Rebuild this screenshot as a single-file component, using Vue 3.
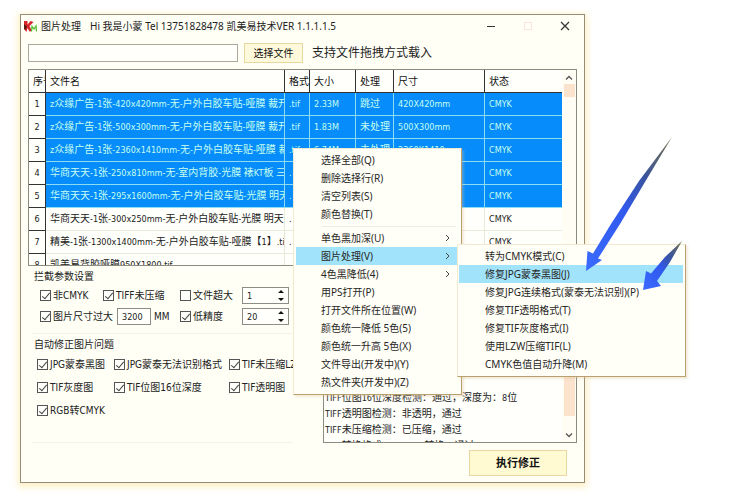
<script setup>
import { ref } from 'vue'

const path = ref('')
const rows = ref([
  { name: 'z众缘广告-1张-420x420mm-无-户外白胶车贴-哑膜 裁开', ext: '.tif', size: '2.33M', state: '跳过', dim: '420X420mm', mode: 'CMYK', selected: true },
  { name: 'z众缘广告-1张-500x300mm-无-户外白胶车贴-哑膜 裁开', ext: '.tif', size: '1.83M', state: '未处理', dim: '500X300mm', mode: 'CMYK', selected: true },
  { name: 'z众缘广告-1张-2360x1410mm-无-户外白胶车贴-哑膜 裁', ext: '.tif', size: '6.74M', state: '未处理', dim: '2360X1410', mode: 'CMYK', selected: true },
  { name: '华商天天-1张-250x810mm-无-室内背胶-光膜 裱KT板 三边', ext: '.', size: '', state: '', dim: '', mode: 'CMYK', selected: true },
  { name: '华商天天-1张-295x1600mm-无-户外白胶车贴-光膜 明天', ext: '.', size: '', state: '', dim: '', mode: 'CMYK', selected: true },
  { name: '华商天天-1张-300x250mm-无-户外白胶车贴-光膜 明天下', ext: '.', size: '', state: '', dim: '', mode: 'CMYK', selected: false },
  { name: '精美-1张-1300x1400mm-无-户外白胶车贴-哑膜【1】.tif', ext: '.', size: '', state: '', dim: '', mode: 'CMYK', selected: false },
  { name: '凯美易背胶哑膜950X1800.tif', ext: '', size: '', state: '', dim: '', mode: '', selected: false },
])

// Latin runs of a file name are set one step smaller than the Chinese ones.
const runs = (text) => text.match(/[\x20-\x7e]+|[^\x20-\x7e]+/g).map((t) => ({ t, latin: t.charCodeAt(0) < 127 }))

const checks = ref({
  nonCmyk: true, tiff: true, large: false, dim: true, low: true,
  jpgBlack: true, jpgFormat: true, tifLzw: true, tifGray: true, tif16: true, tifAlpha: true, rgb: true,
})
const maxFile = ref('1')
const maxDim = ref('3200')
const minDpi = ref('20')

const fixes = [
  { key: 'jpgBlack', label: 'JPG蒙泰黑图' },
  { key: 'jpgFormat', label: 'JPG蒙泰无法识别格式' },
  { key: 'tifLzw', label: 'TIF未压缩LZ' },
  { key: 'tifGray', label: 'TIF灰度图' },
  { key: 'tif16', label: 'TIF位图16位深度' },
  { key: 'tifAlpha', label: 'TIF透明图' },
  { key: 'rgb', label: 'RGB转CMYK' },
]

const menu = [
  { label: '选择全部(Q)' },
  { label: '删除选择行(R)' },
  { label: '清空列表(S)' },
  { label: '颜色替换(T)' },
  { divider: true },
  { label: '单色黑加深(U)', sub: true },
  { label: '图片处理(V)', sub: true, active: true },
  { label: '4色黑降低(4)', sub: true },
  { label: '用PS打开(P)' },
  { label: '打开文件所在位置(W)' },
  { label: '颜色统一降低 5色(5)' },
  { label: '颜色统一升高 5色(X)' },
  { label: '文件导出(开发中)(Y)' },
  { label: '热文件夹(开发中)(Z)' },
]
const submenu = [
  { label: '转为CMYK模式(C)' },
  { label: '修复JPG蒙泰黑图(J)', active: true },
  { label: '修复JPG连续格式(蒙泰无法识别)(P)' },
  { label: '修复TIF透明格式(T)' },
  { label: '修复TIF灰度格式(I)' },
  { label: '使用LZW压缩TIF(L)' },
  { label: 'CMYK色值自动升降(M)' },
]
const logs = ['TIFF位图16位深度检测：通过，深度为：8位', 'TIFF透明图检测：非透明，通过', 'TIFF未压缩检测：已压缩，通过', 'TIFF转换格式：CMYK，转换，通过']
</script>

<template>
  <main class="desk">
    <section class="window">
      <header class="titlebar">
        <svg class="logo" viewBox="0 0 13 13" aria-hidden="true">
          <path d="M0 1 3.500 1 3.500 4.500 6.500 1 9.500 2 5.500 6 8 11 5.500 11.500 3.500 8 2.500 12 0 9Z" fill="#d8242a" />
          <path d="M0 4 3 6.500 1.500 10 0 9Z" fill="#5d1b12" />
          <path d="M7.500 11.500 8 6.500 10 9 12 6 12.500 11.500" fill="none" stroke="#58bf35" stroke-width="1.300" />
        </svg>
        <h1>图片处理</h1>
        <span class="subtitle">Hi 我是小蒙 Tel 13751828478 凯美易技术VER 1.1.1.1.5</span>
        <div class="caption">
          <button aria-label="最小化"><svg viewBox="0 0 10 10"><path d="M1 5.500H9" stroke="#333" /></svg></button>
          <button aria-label="最大化" disabled><svg viewBox="0 0 10 10"><path d="M1.500 1.500H8.500V8.500H1.500Z" fill="none" stroke="#f7e5d8" /></svg></button>
          <button aria-label="关闭"><svg viewBox="0 0 10 10"><path d="M1 1 9 9M9 1 1 9" stroke="#333" stroke-width="1.200" /></svg></button>
        </div>
      </header>

      <div class="toolbar">
        <input v-model="path" class="path" type="text" aria-label="文件路径" />
        <button class="btn pick">选择文件</button>
        <span class="hint">支持文件拖拽方式载入</span>
      </div>

      <div class="list">
        <div class="grid">
          <table>
            <colgroup>
              <col class="c-no" /><col class="c-name" /><col class="c-ext" /><col class="c-size" />
              <col class="c-state" /><col class="c-dim" /><col />
            </colgroup>
            <thead>
              <tr><th>序号</th><th>文件名</th><th>格式</th><th>大小</th><th>处理</th><th>尺寸</th><th>状态</th></tr>
            </thead>
            <tbody>
              <tr v-for="(r, i) in rows" :key="i" :class="{ selected: r.selected }">
                <td>{{ i + 1 }}</td>
                <td class="name"><span v-for="(p, k) in runs(r.name)" :key="k" :class="{ latin: p.latin }">{{ p.t }}</span></td>
                <td>{{ r.ext }}</td><td>{{ r.size }}</td>
                <td>{{ r.state }}</td><td>{{ r.dim }}</td><td>{{ r.mode }}</td>
              </tr>
            </tbody>
          </table>
        </div>
        <div class="scroll">
          <svg viewBox="0 0 8 8"><path d="M1 5.500 4 2.500 7 5.500" fill="none" stroke="#555" stroke-width="1.300" /></svg>
          <i class="thumb short"></i>
        </div>
      </div>

      <div class="lower">
        <div class="options">
          <fieldset>
            <legend>拦截参数设置</legend>
            <div class="rule">
              <label><input v-model="checks.nonCmyk" type="checkbox" />非CMYK</label>
              <label><input v-model="checks.tiff" type="checkbox" />TIFF未压缩</label>
              <label><input v-model="checks.large" type="checkbox" />文件超大</label>
              <span class="spin">
                <input v-model="maxFile" type="text" aria-label="文件大小上限" />
                <svg viewBox="0 0 6 13"><path d="M0 4 3 1 6 4ZM0 9 3 12 6 9Z" fill="#111" /></svg>
              </span>
            </div>
            <div class="rule">
              <label class="wide"><input v-model="checks.dim" type="checkbox" />图片尺寸过大</label>
              <span class="dim"><input id="max-dim" v-model="maxDim" type="text" aria-label="图片尺寸上限" /><label for="max-dim">MM</label></span>
              <label><input v-model="checks.low" type="checkbox" />低精度</label>
              <span class="spin">
                <input v-model="minDpi" type="text" aria-label="最低精度" />
                <svg viewBox="0 0 6 13"><path d="M0 4 3 1 6 4ZM0 9 3 12 6 9Z" fill="#111" /></svg>
              </span>
            </div>
          </fieldset>
          <fieldset class="second">
            <legend>自动修正图片问题</legend>
            <div class="fixes">
              <label v-for="f in fixes" :key="f.key"><input v-model="checks[f.key]" type="checkbox" />{{ f.label }}</label>
            </div>
          </fieldset>
        </div>
        <div class="log">
          <div class="lines"><p v-for="l in logs" :key="l"><span v-for="(p, k) in runs(l)" :key="k" :class="{ latin: p.latin }">{{ p.t }}</span></p></div>
          <div class="scroll end">
            <i class="thumb"></i>
            <svg viewBox="0 0 8 8"><path d="M1 2.500 4 5.500 7 2.500" fill="none" stroke="#555" stroke-width="1.300" /></svg>
          </div>
        </div>
      </div>

      <footer><button class="btn run">执行修正</button></footer>
    </section>

    <nav class="menu main-menu" aria-label="列表菜单">
      <template v-for="(m, i) in menu" :key="i">
        <hr v-if="m.divider" />
        <button v-else :class="{ active: m.active }">
          {{ m.label }}
          <svg v-if="m.sub" viewBox="0 0 5 8"><path d="M1 1 4 4 1 7" fill="none" stroke="#444" /></svg>
        </button>
      </template>
    </nav>
    <nav class="menu sub-menu" aria-label="图片处理">
      <button v-for="m in submenu" :key="m.label" :class="{ active: m.active }">{{ m.label }}</button>
    </nav>

    <svg class="arrows" viewBox="0 0 102 160" aria-hidden="true">
      <defs>
        <linearGradient id="shade" x1="1" y1="0" x2="0" y2="1">
          <stop offset="0" stop-color="#77744a" /><stop offset=".3" stop-color="#3a539c" /><stop offset=".55" stop-color="#3159ee" /><stop offset="1" stop-color="#3b6bff" />
        </linearGradient>
      </defs>
      <path d="M87 2 54 46 26 89 8 118.500 2.500 116 1 136 17 125 13 123.500 35 89 60 47Z" fill="url(#shade)" />
      <path d="M97 106 80 122 66 138.500 61 136 58 155 76 151 72 146 85 127Z" fill="url(#shade)" />
    </svg>
  </main>
</template>

<style>
body { background: #fff; }
</style>

<style scoped>
.desk {
  position: relative;
  box-sizing: border-box;
  min-height: 100vh;
  padding: 14px 148px 16px 20px;
  color: #222;
  font: 10px/12px "Noto Sans", "Noto Sans CJK SC", sans-serif;
}
.desk * { box-sizing: border-box; }
button, input { margin: 0; color: inherit; font: inherit; }
button { padding: 0; border: 0; background: none; }

.window {
  padding: 0 7px 6px;
  border: 1px solid #978c78;
  background: #fffff6;
  box-shadow: 0 2px 7px 2px #fdf0c4;
}
.titlebar { display: flex; align-items: center; height: 22px; margin: 0 -4px; }
.logo { width: 13px; height: 13px; margin-right: 4px; }
h1 { margin: 0 9px 0 0; font-size: 10px; font-weight: 400; }
.subtitle { font-size: 10px; white-space: nowrap; }
.caption { display: flex; gap: 27px; margin-left: auto; padding-right: 11px; }
.caption button { width: 10px; height: 10px; }
.caption svg { display: block; width: 10px; height: 10px; }

.toolbar { display: flex; align-items: center; height: 32px; padding-bottom: 1px; }
.path { flex: 0 0 210px; height: 18px; border: 1px solid #aaa99c; background: #fffffb; }
.btn { border: 1px solid #e6d8a0; background: #fff9dc; color: #111; }
.pick { width: 59px; height: 20px; margin: 0 9px 0 6px; }
.hint { font-size: 12px; white-space: nowrap; }

.list { display: flex; height: 197px; border: 1px solid #8b8b80; background: #fffffb; }
.grid { flex: 1; min-width: 0; overflow: hidden; }
table { width: 100%; table-layout: fixed; border-collapse: separate; border-spacing: 0; }
.c-no { width: 17px; }
.c-name { width: 239px; }
.c-ext { width: 25px; }
.c-size { width: 46px; }
.c-state { width: 38px; }
.c-dim { width: 91px; }
th, td { height: 23px; padding: 0 0 0 4px; overflow: hidden; font-weight: 400; text-align: left; white-space: nowrap; }
th { border-right: 1px solid #333; border-bottom: 1px solid #333; color: #111; }
th:last-child { border-right: 0; }
td { border-right: 1px solid #e9e9d8; border-bottom: 1px solid #e9e9d8; font-family: "DejaVu Sans Condensed", "Noto Sans CJK SC", sans-serif; font-size: 10px; }
td:not(:nth-child(2)):not(:nth-child(5)) { font-size: 9px; }
td:last-child { border-right: 0; }
td:first-child { padding: 0; border-right-color: #333; border-bottom-color: #333; text-align: center; }
.latin { font-size: 9px; line-height: 1; }
tr.selected td:not(:first-child) { border-color: #8bdcf0; background: #078cfb; color: #c5fff0; }
.scroll { display: flex; flex: 0 0 14px; flex-direction: column; align-items: center; padding: 4px 1px; background: #fffdf4; }
.scroll svg { width: 8px; height: 8px; }
.thumb { width: 11px; background: #fbe3cd; }
.thumb.short { height: 13px; margin-top: 2px; }

.lower { display: flex; gap: 30px; height: 177px; }
.options { flex: 0 0 265px; min-width: 0; padding: 4px 0 0 4px; }
fieldset { min-width: 0; margin: 0; padding: 3px 0 6px; border: 0; border-bottom: 1px solid #f6f4e2; }
legend { padding: 0 0 0 2px; color: #222; }
label { display: flex; align-items: center; gap: 2px; white-space: nowrap; font-family: "DejaVu Sans Condensed", "Noto Sans CJK SC", sans-serif; }
input[type="checkbox"] { flex: none; display: grid; place-items: center; width: 11px; height: 11px; appearance: none; border: 1px solid #555; background: #fffffb; }
input[type="checkbox"]:checked::after { content: ""; width: 3px; height: 7px; margin-bottom: 2px; border: solid #444; border-width: 0 1px 1px 0; transform: rotate(40deg); }
.rule { display: grid; grid-template-columns: 63px 77px 62px 1fr; align-items: center; height: 21px; padding-left: 8px; }
.rule .wide { width: 74px; }
.dim { display: flex; gap: 3px; padding-left: 14px; }
.dim input { width: 34px; }
.dim input, .spin input { height: 17px; padding: 0 4px; border: 1px solid #8d8d85; background: #fffffb; font-family: "DejaVu Sans Condensed", sans-serif; font-size: 9px; }
.spin { display: grid; width: 47px; }
.spin > * { grid-area: 1 / 1; }
.spin input { width: 47px; }
.spin svg { justify-self: end; align-self: center; width: 6px; height: 13px; margin-right: 5px; }
.second { margin-top: 4px; padding-bottom: 20px; }
.fixes { display: grid; grid-template-columns: 77px 115px 1fr; grid-auto-rows: 23px; align-items: center; padding-left: 5px; }

.log { display: flex; flex: 1; min-width: 0; border: 1px solid #8b8b80; border-top: 0; background: #fffffb; }
.lines { display: flex; flex: 1; flex-direction: column; min-width: 0; padding: 124px 0 0 1px; overflow: hidden; font-family: "DejaVu Sans Condensed", "Noto Sans CJK SC", sans-serif; font-size: 10px; }
.lines p { flex: none; height: 16px; margin: 0; line-height: 16px; white-space: nowrap; color: #222; }
.end .thumb { flex: 1; margin: 0 0 15px; }
.end { padding-bottom: 3px; }

footer { display: flex; justify-content: flex-end; padding: 7px 10px 0 0; }
.run { width: 98px; height: 26px; font-size: 11px; font-weight: 700; background: #fffad2; }

.menu { position: absolute; display: flex; flex-direction: column; border: 1px solid #f2ead0; border-right-color: #b9a06e; border-bottom-color: #b9a06e; background: #fffff8; box-shadow: 2px 2px 2px #d8c39955; }
.menu button { display: flex; align-items: center; justify-content: space-between; flex: none; height: 18px; padding: 0 8px 0 25px; text-align: left; white-space: nowrap; color: #28261e; }
.menu button.active { background: #a0e3fb; }
.menu svg { width: 5px; height: 8px; }
.menu hr { width: 134px; height: 1px; margin: 3px 1px 2px 26px; border: 0; background: #eeecdc; }
.main-menu { left: 293px; top: 148px; width: 169px; padding: 2px 3px 3px 2px; }
.sub-menu { left: 457px; top: 244px; width: 229px; padding: 2px 2px 3px 1px; }
.sub-menu button { padding-left: 26px; }
.arrows { position: absolute; left: 585px; top: 135px; width: 102px; height: 160px; pointer-events: none; }
</style>
